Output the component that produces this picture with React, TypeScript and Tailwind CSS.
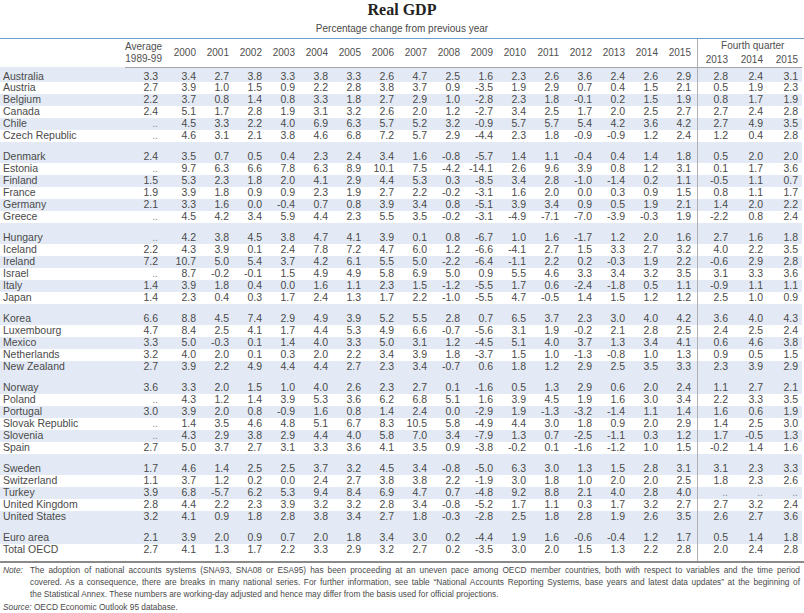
import React from 'react';

// Real GDP table — OECD Economic Outlook style
const YEARS = ['2000', '2001', '2002', '2003', '2004', '2005', '2006', '2007', '2008', '2009', '2010', '2011', '2012', '2013', '2014', '2015'];
const QUARTERS = ['2013', '2014', '2015'];

// name, then avg 1989-99, 16 years, 3 fourth-quarter values
const GROUPS: [string, string][][] = [
  [
    ['Australia', '3.3 3.4 2.7 3.8 3.3 3.8 3.3 2.6 4.7 2.5 1.6 2.3 2.6 3.6 2.4 2.6 2.9 2.8 2.4 3.1'],
    ['Austria', '2.7 3.9 1.0 1.5 0.9 2.2 2.8 3.8 3.7 0.9 -3.5 1.9 2.9 0.7 0.4 1.5 2.1 0.5 1.9 2.3'],
    ['Belgium', '2.2 3.7 0.8 1.4 0.8 3.3 1.8 2.7 2.9 1.0 -2.8 2.3 1.8 -0.1 0.2 1.5 1.9 0.8 1.7 1.9'],
    ['Canada', '2.4 5.1 1.7 2.8 1.9 3.1 3.2 2.6 2.0 1.2 -2.7 3.4 2.5 1.7 2.0 2.5 2.7 2.7 2.4 2.8'],
    ['Chile', '.. 4.5 3.3 2.2 4.0 6.9 6.3 5.7 5.2 3.2 -0.9 5.7 5.7 5.4 4.2 3.6 4.2 2.7 4.9 3.5'],
    ['Czech Republic', '.. 4.6 3.1 2.1 3.8 4.6 6.8 7.2 5.7 2.9 -4.4 2.3 1.8 -0.9 -0.9 1.2 2.4 1.2 0.4 2.8'],
  ],
  [
    ['Denmark', '2.4 3.5 0.7 0.5 0.4 2.3 2.4 3.4 1.6 -0.8 -5.7 1.4 1.1 -0.4 0.4 1.4 1.8 0.5 2.0 2.0'],
    ['Estonia', '.. 9.7 6.3 6.6 7.8 6.3 8.9 10.1 7.5 -4.2 -14.1 2.6 9.6 3.9 0.8 1.2 3.1 0.1 1.7 3.6'],
    ['Finland', '1.5 5.3 2.3 1.8 2.0 4.1 2.9 4.4 5.3 0.3 -8.5 3.4 2.8 -1.0 -1.4 0.2 1.1 -0.5 1.1 0.7'],
    ['France', '1.9 3.9 1.8 0.9 0.9 2.3 1.9 2.7 2.2 -0.2 -3.1 1.6 2.0 0.0 0.3 0.9 1.5 0.8 1.1 1.7'],
    ['Germany', '2.1 3.3 1.6 0.0 -0.4 0.7 0.8 3.9 3.4 0.8 -5.1 3.9 3.4 0.9 0.5 1.9 2.1 1.4 2.0 2.2'],
    ['Greece', '.. 4.5 4.2 3.4 5.9 4.4 2.3 5.5 3.5 -0.2 -3.1 -4.9 -7.1 -7.0 -3.9 -0.3 1.9 -2.2 0.8 2.4'],
  ],
  [
    ['Hungary', '.. 4.2 3.8 4.5 3.8 4.7 4.1 3.9 0.1 0.8 -6.7 1.0 1.6 -1.7 1.2 2.0 1.6 2.7 1.6 1.8'],
    ['Iceland', '2.2 4.3 3.9 0.1 2.4 7.8 7.2 4.7 6.0 1.2 -6.6 -4.1 2.7 1.5 3.3 2.7 3.2 4.0 2.2 3.5'],
    ['Ireland', '7.2 10.7 5.0 5.4 3.7 4.2 6.1 5.5 5.0 -2.2 -6.4 -1.1 2.2 0.2 -0.3 1.9 2.2 -0.6 2.9 2.8'],
    ['Israel', '.. 8.7 -0.2 -0.1 1.5 4.9 4.9 5.8 6.9 5.0 0.9 5.5 4.6 3.3 3.4 3.2 3.5 3.1 3.3 3.6'],
    ['Italy', '1.4 3.9 1.8 0.4 0.0 1.6 1.1 2.3 1.5 -1.2 -5.5 1.7 0.6 -2.4 -1.8 0.5 1.1 -0.9 1.1 1.1'],
    ['Japan', '1.4 2.3 0.4 0.3 1.7 2.4 1.3 1.7 2.2 -1.0 -5.5 4.7 -0.5 1.4 1.5 1.2 1.2 2.5 1.0 0.9'],
  ],
  [
    ['Korea', '6.6 8.8 4.5 7.4 2.9 4.9 3.9 5.2 5.5 2.8 0.7 6.5 3.7 2.3 3.0 4.0 4.2 3.6 4.0 4.3'],
    ['Luxembourg', '4.7 8.4 2.5 4.1 1.7 4.4 5.3 4.9 6.6 -0.7 -5.6 3.1 1.9 -0.2 2.1 2.8 2.5 2.4 2.5 2.4'],
    ['Mexico', '3.3 5.0 -0.3 0.1 1.4 4.0 3.3 5.0 3.1 1.2 -4.5 5.1 4.0 3.7 1.3 3.4 4.1 0.6 4.6 3.8'],
    ['Netherlands', '3.2 4.0 2.0 0.1 0.3 2.0 2.2 3.4 3.9 1.8 -3.7 1.5 1.0 -1.3 -0.8 1.0 1.3 0.9 0.5 1.5'],
    ['New Zealand', '2.7 3.9 2.2 4.9 4.4 4.4 2.7 2.3 3.4 -0.7 0.6 1.8 1.2 2.9 2.5 3.5 3.3 2.3 3.9 2.9'],
  ],
  [
    ['Norway', '3.6 3.3 2.0 1.5 1.0 4.0 2.6 2.3 2.7 0.1 -1.6 0.5 1.3 2.9 0.6 2.0 2.4 1.1 2.7 2.1'],
    ['Poland', '.. 4.3 1.2 1.4 3.9 5.3 3.6 6.2 6.8 5.1 1.6 3.9 4.5 1.9 1.6 3.0 3.4 2.2 3.3 3.5'],
    ['Portugal', '3.0 3.9 2.0 0.8 -0.9 1.6 0.8 1.4 2.4 0.0 -2.9 1.9 -1.3 -3.2 -1.4 1.1 1.4 1.6 0.6 1.9'],
    ['Slovak Republic', '.. 1.4 3.5 4.6 4.8 5.1 6.7 8.3 10.5 5.8 -4.9 4.4 3.0 1.8 0.9 2.0 2.9 1.4 2.5 3.0'],
    ['Slovenia', '.. 4.3 2.9 3.8 2.9 4.4 4.0 5.8 7.0 3.4 -7.9 1.3 0.7 -2.5 -1.1 0.3 1.2 1.7 -0.5 1.3'],
    ['Spain', '2.7 5.0 3.7 2.7 3.1 3.3 3.6 4.1 3.5 0.9 -3.8 -0.2 0.1 -1.6 -1.2 1.0 1.5 -0.2 1.4 1.6'],
  ],
  [
    ['Sweden', '1.7 4.6 1.4 2.5 2.5 3.7 3.2 4.5 3.4 -0.8 -5.0 6.3 3.0 1.3 1.5 2.8 3.1 3.1 2.3 3.3'],
    ['Switzerland', '1.1 3.7 1.2 0.2 0.0 2.4 2.7 3.8 3.8 2.2 -1.9 3.0 1.8 1.0 2.0 2.0 2.5 1.8 2.3 2.6'],
    ['Turkey', '3.9 6.8 -5.7 6.2 5.3 9.4 8.4 6.9 4.7 0.7 -4.8 9.2 8.8 2.1 4.0 2.8 4.0 .. .. ..'],
    ['United Kingdom', '2.8 4.4 2.2 2.3 3.9 3.2 3.2 2.8 3.4 -0.8 -5.2 1.7 1.1 0.3 1.7 3.2 2.7 2.7 3.2 2.4'],
    ['United States', '3.2 4.1 0.9 1.8 2.8 3.8 3.4 2.7 1.8 -0.3 -2.8 2.5 1.8 2.8 1.9 2.6 3.5 2.6 2.7 3.6'],
  ],
  [
    ['Euro area', '2.1 3.9 2.0 0.9 0.7 2.0 1.8 3.4 3.0 0.2 -4.4 1.9 1.6 -0.6 -0.4 1.2 1.7 0.5 1.4 1.8'],
    ['Total OECD', '2.7 4.1 1.3 1.7 2.2 3.3 2.9 3.2 2.7 0.2 -3.5 3.0 2.0 1.5 1.3 2.2 2.8 2.0 2.4 2.8'],
  ],
];

function Num({ v }: { v: string }) {
  if (v === '..') return <span className="text-[#8c8c8c]">..</span>;
  return <>{v}</>;
}

function DataRow({ name, values, blue, pad, last }: { name: string; values: string; blue: boolean; pad: string; last: boolean }) {
  const vals = values.split(' ');
  const avg = vals[0];
  const years = vals.slice(1, 17);
  const q = vals.slice(17);
  const cell = `${pad} ${last ? 'pb-[5px]' : ''} leading-[11.9px] align-bottom`;
  return (
    <tr className={blue ? 'bg-[#e4eaf5]' : 'bg-white'}>
      <td className={`${cell} pl-[3px] whitespace-nowrap`}>{name}</td>
      <td className={`${cell} text-right pr-[5px]`}>
        <Num v={avg} />
      </td>
      {years.map((v, i) => (
        <td key={i} className={`${cell} text-right`}>
          <Num v={v} />
        </td>
      ))}
      <td className={`${cell} border-r border-[#b0b0b0]`} />
      {q.map((v, i) => (
        <td key={i} className={`${cell} text-right pr-[4px]`}>
          <Num v={v} />
        </td>
      ))}
    </tr>
  );
}

export default function App() {
  return (
    <div className="w-[804px] h-[613px] bg-white overflow-hidden font-['Liberation_Sans',Arial,sans-serif] text-[#4a4a4a]">
      <div className="h-[20px] text-center font-['Liberation_Serif',serif] font-bold text-[16px] leading-[20px] text-[#222]">Real GDP</div>
      <div className="mt-[3px] text-center text-[10px] leading-[12px] text-[#4a4a4a]">Percentage change from previous year</div>
      <div className="mt-[2.5px] h-[1.5px] bg-[#6b9cca]" />

      <table className="table-fixed border-collapse w-[802px] text-[10.5px]">
        <colgroup>
          <col className="w-[125px]" />
          <col className="w-[38px]" />
          {YEARS.map((y) => (
            <col key={y} className="w-[33px]" />
          ))}
          <col className="w-[6px]" />
          {QUARTERS.map((y) => (
            <col key={y} className="w-[35px]" />
          ))}
        </colgroup>
        <thead className="text-[#505050] text-[10px]">
          <tr className="h-[14px]">
            <th rowSpan={2} />
            <th rowSpan={2} className="border-b border-[#a5a5a5] text-right pr-[1px] font-normal leading-[12px] align-middle whitespace-nowrap">
              Average
              <br />
              1989-99
            </th>
            {YEARS.map((y) => (
              <th key={y} rowSpan={2} className="border-b border-[#a5a5a5] text-right font-normal align-middle">
                {y}
              </th>
            ))}
            <th rowSpan={2} className="border-b border-b-[#a5a5a5] border-r border-r-[#b0b0b0]" />
            <th colSpan={3} className="text-center pl-[6px] font-normal leading-[12px] align-middle whitespace-nowrap">
              Fourth quarter
            </th>
          </tr>
          <tr className="h-[14px]">
            {QUARTERS.map((y) => (
              <th key={y} className="border-b border-[#a5a5a5] text-right pr-[4px] font-normal leading-[12px] align-middle">
                {y}
              </th>
            ))}
          </tr>
        </thead>
        <tbody>
          {GROUPS.map((group, gi) =>
            group.map(([name, values], i) => (
              <DataRow
                key={name}
                name={name}
                values={values}
                blue={i % 2 === 0}
                pad={i === 0 ? (gi === 0 ? 'pt-[3px]' : 'pt-[9.5px]') : ''}
                last={gi === GROUPS.length - 1 && i === group.length - 1}
              />
            ))
          )}
        </tbody>
      </table>
      <div className="h-[1.5px] bg-[#8a8a8a]" />

      <div className="mt-[1px] flex pl-[3px] pr-[4px] text-[8.3px] leading-[12px] text-[#4a4a4a]">
        <span className="w-[27px] shrink-0 italic">Note:</span>
        <div className="flex-1 min-w-0">
          <div className="[text-align-last:justify] whitespace-nowrap">
            The adoption of national accounts systems (SNA93, SNA08 or ESA95) has been proceeding at an uneven pace among OECD member countries, both with respect to variables and the time period
          </div>
          <div className="[text-align-last:justify] whitespace-nowrap">
            covered. As a consequence, there are breaks in many national series. For further information, see table “National Accounts Reporting Systems, base years and latest data updates” at the beginning of
          </div>
          <div>the Statistical Annex. These numbers are working-day adjusted and hence may differ from the basis used for official projections.</div>
        </div>
      </div>
      <div className="mt-[1px] pl-[3px] text-[8.3px] leading-[12px] text-[#4a4a4a]">
        <span className="italic">Source:</span> OECD Economic Outlook 95 database.
      </div>
    </div>
  );
}
